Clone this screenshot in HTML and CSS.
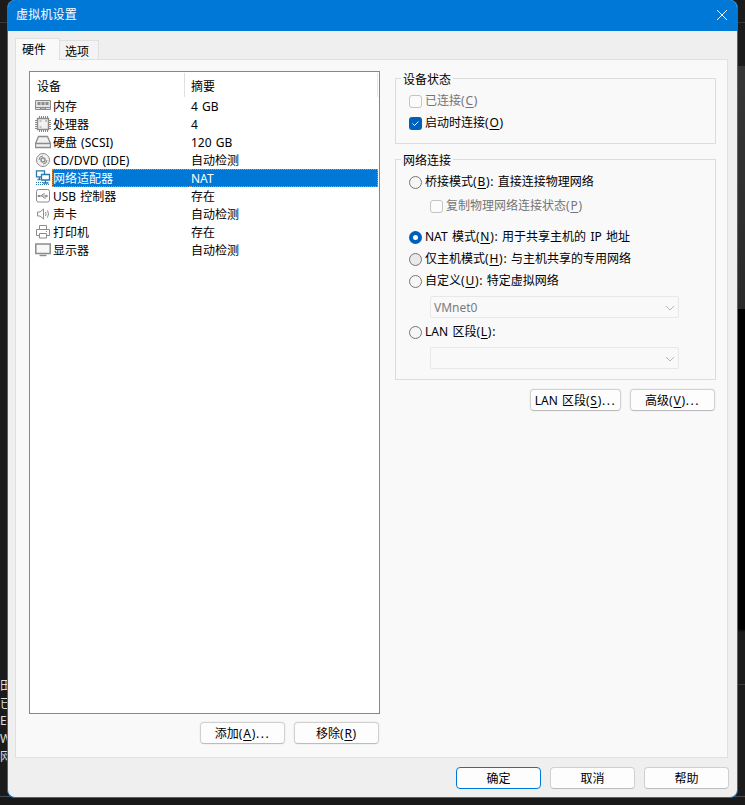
FILE: index.html
```html
<!DOCTYPE html>
<html lang="zh-CN">
<head>
<meta charset="utf-8">
<title>虚拟机设置</title>
<link rel="stylesheet" href="styles.css">
</head>
<body>
<div class="backdrop-left"><span>田</span><span>已</span><span>E:</span><span>W</span><span>网</span></div>
<div class="backdrop-right"></div>
<main class="dialog">
  <header class="titlebar"><h1>虚拟机设置</h1>
    <svg class="close" width="12" height="12" viewBox="0 0 12 12"><path d="M1 1l10 10M11 1L1 11"/></svg>
  </header>
  <nav class="tabs"><span class="tab active">硬件</span><span class="tab">选项</span></nav>
  <section class="panel">
    <div class="left">
      <div class="list">
        <div class="head"><span>设备</span><span>摘要</span></div>
        <div class="row"><svg viewBox="0 0 16 16"><path d="M.5 2.500h15v9h-15z" fill="#e4e4e4"/><path d="M0 9.500h16M5.500 11.500v-1.500h5v1.500"/><path d="M2.500 5.500h3M6.500 5.500h3M10.500 5.500h3" stroke-width="3"/></svg><span>内存</span><span>4 GB</span></div>
        <div class="row"><svg viewBox="0 0 16 16"><path d="M2.500 2.500h11v11h-11z" stroke-width="1.400" fill="#f1f1f1"/><path d="M4.500 0v2M6.500 0v2M8.500 0v2M10.500 0v2M12.500 0v2M4.500 14v2M6.500 14v2M8.500 14v2M10.500 14v2M12.500 14v2M0 4.500h2M0 6.500h2M0 8.500h2M0 10.500h2M0 12.500h2M14 4.500h2M14 6.500h2M14 8.500h2M14 10.500h2M14 12.500h2M4.500 5h2M10 5h2M4.500 11h2"/></svg><span>处理器</span><span>4</span></div>
        <div class="row"><svg viewBox="0 0 16 16"><path d="M.5 9.500L3.500 2.500h9l3 7v4H.5z" fill="#f1f1f1" stroke-width="1.300"/><path d="M.5 9.500h15" stroke-width="1.300"/></svg><span>硬盘 (SCSI)</span><span>120 GB</span></div>
        <div class="row"><svg viewBox="0 0 16 16"><circle cx="8" cy="8" r="6.500" fill="#f1f1f1"/><circle cx="8" cy="8" r="2" stroke-width="1.500"/><path d="M4 8a4 4 0 0 1 4-4M12 8a4 4 0 0 1-4 4"/></svg><span>CD/DVD (IDE)</span><span>自动检测</span></div>
        <div class="row selected"><svg viewBox="0 0 16 16"><path d="M1.500 .8h8v6h-8zM4.500 6.500v3M2.500 9.500h3" stroke-width="1.300"/><path d="M6.500 4.500h8v5.500h-8z" fill="#fff" stroke-width="1.300"/><path d="M10.500 10v3M8 13h5.500" stroke-width="1.300"/><path d="M1 12.500h7M1 14.500h14" stroke-dasharray="1 1"/></svg><span>网络适配器</span><span>NAT</span></div>
        <div class="row"><svg viewBox="0 0 16 16"><rect x="1.500" y="1.500" width="13" height="12.500" rx="2"/><path d="M4 8h8M6 8l2-2h2M7 8l2 2h2"/><path d="M3 7.500h2v1H3zM11 7l1.500 1-1.500 1z" fill="#888"/></svg><span>USB 控制器</span><span>存在</span></div>
        <div class="row"><svg viewBox="0 0 16 16"><path d="M2.500 6v4h2.500l3.500 3V3L5 6zM10.500 6q1.300 2 0 4M12.500 4.500q2 3.500 0 7"/></svg><span>声卡</span><span>自动检测</span></div>
        <div class="row"><svg viewBox="0 0 16 16"><path d="M4.500 5.500v-4h7v4M4.500 11.500h-3v-6h13v6h-3M4.500 9.500h7v4.500h-7zM11 7.500h1"/></svg><span>打印机</span><span>存在</span></div>
        <div class="row"><svg viewBox="0 0 16 16"><path d="M.8 2h14.400v9.500H.8z" stroke-width="1.500" fill="#f8f8f8"/><path d="M4.500 13.500h7" stroke-width="1.400"/></svg><span>显示器</span><span>自动检测</span></div>
      </div>
      <div class="actions"><button>添加<span class="key">(<u>A</u>)</span><span class="dots">...</span></button><button>移除<span class="key">(<u>R</u>)</span></button></div>
    </div>
    <div class="right">
      <fieldset class="status"><legend>设备状态</legend>
        <label class="opt off"><i class="box"></i><span>已连接<span class="key">(<u>C</u>)</span></span></label>
        <label class="opt"><i class="box on"><svg width="13" height="13" viewBox="0 0 13 13"><path d="M3.500 6.500l2 2L9.500 4.500"/></svg></i><span>启动时连接<span class="key">(<u>O</u>)</span></span></label>
      </fieldset>
      <fieldset class="network"><legend>网络连接</legend>
        <label class="opt"><i class="radio"></i><span>桥接模式<span class="key">(<u>B</u>)</span>: 直接连接物理网络</span></label>
        <label class="opt off sub"><i class="box"></i><span>复制物理网络连接状态<span class="key">(<u>P</u>)</span></span></label>
        <label class="opt nat"><i class="radio on"></i><span>NAT 模式<span class="key">(<u>N</u>)</span>: 用于共享主机的 IP 地址</span></label>
        <label class="opt"><i class="radio shade"></i><span>仅主机模式<span class="key">(<u>H</u>)</span>: 与主机共享的专用网络</span></label>
        <label class="opt"><i class="radio"></i><span>自定义<span class="key">(<u>U</u>)</span>: 特定虚拟网络</span></label>
        <div class="combo"><span>VMnet0</span><svg width="10" height="6" viewBox="0 0 10 6"><path d="M1 1l4 4 4-4"/></svg></div>
        <label class="opt lan"><i class="radio"></i><span>LAN 区段<span class="key">(<u>L</u>)</span>:</span></label>
        <div class="combo"><span></span><svg width="10" height="6" viewBox="0 0 10 6"><path d="M1 1l4 4 4-4"/></svg></div>
      </fieldset>
      <div class="actions"><button class="wide">LAN 区段<span class="key">(<u>S</u>)</span><span class="dots">...</span></button><button>高级<span class="key">(<u>V</u>)</span><span class="dots">...</span></button></div>
    </div>
  </section>
  <footer><button class="default">确定</button><button>取消</button><button>帮助</button></footer>
</main>
</body>
</html>
```
FILE: styles.css
```css
* { box-sizing: border-box; }
body {
  margin: 0; width: 745px; height: 805px; overflow: hidden;
  background: linear-gradient(#1b1b1b 0 22px, #3a3a3a 22px 23px, #1b1b1b 23px 796px, #4b4b4b 796px 797px, #191919 797px);
  display: grid; grid-template-columns: 7px 731px 7px;
  font: 12px/18px "Noto Sans", "Noto Sans CJK SC", sans-serif; color: #000;
}
.backdrop-left { padding-top: 677px; color: #ddd; overflow: hidden; display: flex; flex-direction: column; }
.backdrop-left span { height: 17.700px; white-space: nowrap; }
.backdrop-right { order: 3; background: linear-gradient(#1b1b1b 0 22px, #3a3a3a 22px 23px, #1b1b1b 23px 66px, #363636 66px, #292929 309px, #000 309px 629px, #1b1b1b 632px 684px, #3a3a3a 684px 685px, #1b1b1b 685px 796px, #4b4b4b 796px 797px, #191919 797px); }
.dialog { height: 798px; border: 1px solid #0078d7; border-top: 0; border-radius: 8px; background: #efefef; overflow: hidden; }
.titlebar { height: 31px; background: #0078d7; display: flex; align-items: center; justify-content: space-between; padding: 0 9px 2px 8px; }
h1 { margin: 0; font: inherit; color: #fff; letter-spacing: .2px; }
.close { stroke: #fff; fill: none; }
.tabs { display: flex; align-items: flex-end; height: 29px; padding: 7px 0 0 7px; position: relative; z-index: 1; }
.tab { border: 1px solid #e0e0e0; border-left-width: 0; background: #f3f3f3; width: 39px; height: 20px; padding: 2px 0 0 5px; }
.tab.active { border-left-width: 1px; width: 45px; height: 22px; padding-left: 6px; background: #f9f9f9; border-bottom: 0; }
.panel { margin: -1px 9px 0 7px; height: 699px; background: #f9f9f9; border: 1px solid #e0e0e0; display: flex; padding: 11px 11px 0 13px; gap: 15px; }
.left { width: 351px; }
.list { height: 643px; border: 1px solid #828790; background: #fff; }
.head { display: flex; height: 25px; padding: 1px 1px 0 7px; align-items: stretch; line-height: 28px; }
.head span:first-child { width: 148px; border-right: 1px solid #e0e0e0; }
.head span:last-child { flex: 1; padding-left: 6px; border-right: 1px solid #e8e8e8; }
.row { height: 18px; display: grid; grid-template-columns: 17px 138px 1fr; padding-left: 5px; line-height: 20px; padding-right: 1px; word-spacing: 1px; }
.row svg { width: 16px; height: 16px; margin-top: 1px; fill: none; stroke: #8c8c8c; }
.row span { height: 18px; padding-left: 1px; white-space: pre; }
.row.selected span { background: #0078d7; color: #fff; border: 1px dotted #e28b3c; border-right: 0; padding-left: 0; line-height: 18px; }
.row.selected span:last-child { border-left: 0; border-right: 1px dotted #e28b3c; padding-left: 1px; }
.row.selected svg { stroke: #287aaf; }
.actions { display: flex; justify-content: flex-end; gap: 9px; padding: 8px 0 0; }
.left .actions { padding-right: 1px; }
button { width: 85px; height: 22px; padding: 2px 0 0; border: 1px solid #d0d0d0; border-bottom-color: #bcbcbc; border-radius: 4px; background: #fdfdfd; font: inherit; line-height: 18px; color: #000; box-shadow: 0 0 0 1px #f2f2f2; word-spacing: 1px; white-space: nowrap; }
button.wide { width: 91px; }
button.default { border-color: #0078d7; }
.key { letter-spacing: .75px; }
.dots { letter-spacing: 1.500px; }
u { text-underline-offset: 2px; }
.right { width: 321px; padding-top: 7px; }
fieldset { position: relative; margin: 0; border: 1px solid #dcdcdc; min-width: 0; padding: 11px 0 0 13px; }
legend { position: absolute; top: -8px; left: 5px; padding: 0 2px; background: #f9f9f9; }
.status { height: 66px; }
.network { height: 221px; margin-top: 15px; }
.opt { display: flex; align-items: center; gap: 3px; height: 22px; white-space: pre; word-spacing: 1.200px; }
.off { color: #747474; }
.sub { margin-left: 21px; height: 26px; }
.nat { margin-top: 7px; }
.box, .radio { flex: none; width: 13px; height: 13px; border: 1px solid #757575; background: #f6f6f6; display: block; }
.box { border-radius: 3px; border-color: #c4c4c4; background: #fbfbfb; }
.box.on { border: 0; background: #005fb8; }
.box svg { display: block; fill: none; stroke: #fff; }
.radio { border-radius: 50%; }
.radio.shade { background: #e9e9e9; }
.radio.on { border: 4px solid #005fb8; background: #fff; }
.combo { margin: 4px 0 0 21px; width: 249px; height: 22px; border: 1px solid #e8e8e8; border-radius: 2px; display: flex; align-items: center; justify-content: space-between; padding: 1px 3px 0; color: #7b7b7b; }
.combo svg { fill: none; stroke: #b5b5b5; }
.lan { margin-top: 3px; }
.right .actions { padding: 9px 1px 0 0; }
footer { display: flex; justify-content: flex-end; gap: 9px; padding: 9px 8px 0; }
footer button { box-shadow: none; }
```
